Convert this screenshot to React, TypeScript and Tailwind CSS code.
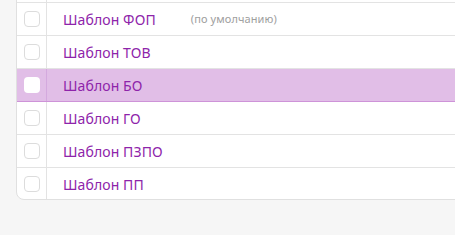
import React from "react";

const rows = [
    { name: "", default: false },
    { name: "Шаблон ФОП", default: true },
    { name: "Шаблон ТОВ", default: false },
    { name: "Шаблон БО", default: false, active: true },
    { name: "Шаблон ГО", default: false },
    { name: "Шаблон ПЗПО", default: false },
    { name: "Шаблон ПП", default: false },
];

export default function App() {
    return (
        <div
            className="w-[455px] h-[235px] overflow-hidden bg-[#f6f6f6]"
            style={{ fontFamily: '"Noto Sans", "Open Sans", sans-serif' }}
        >
            <div className="ml-4 w-[480px] -mt-[31px] bg-white border border-[#e0e0e0] rounded-b-lg overflow-hidden">
                {rows.map((row, i) => {
                    const last = i === rows.length - 1;
                    return (
                        <div
                            key={i}
                            className={
                                "flex items-stretch " +
                                (last ? "h-[31px] " : "h-[33px] border-b ") +
                                (row.active
                                    ? "bg-[#e1bee7] border-[#ce93d8]"
                                    : "border-[#e3e3e3]")
                            }
                        >
                            <div
                                className={
                                    "w-[30px] flex items-center justify-center border-r " +
                                    (row.active ? "border-[#d4a9de]" : "border-[#e3e3e3]")
                                }
                            >
                                <span
                                    className={
                                        "w-4 h-4 rounded-[4px] " +
                                        (row.active
                                            ? "bg-white"
                                            : "bg-white border border-[#dcdcdc]")
                                    }
                                />
                            </div>
                            <div className="flex items-center pl-4 pt-px">
                                <span className="text-[14px] text-[#8e24aa] tracking-[0.1px]">
                                    {row.name}
                                </span>
                                {row.default && (
                                    <span className="ml-[35px] text-[11px] text-[#9e9e9e] tracking-[0.1px]">
                                        (по умолчанию)
                                    </span>
                                )}
                            </div>
                        </div>
                    );
                })}
            </div>
        </div>
    );
}
